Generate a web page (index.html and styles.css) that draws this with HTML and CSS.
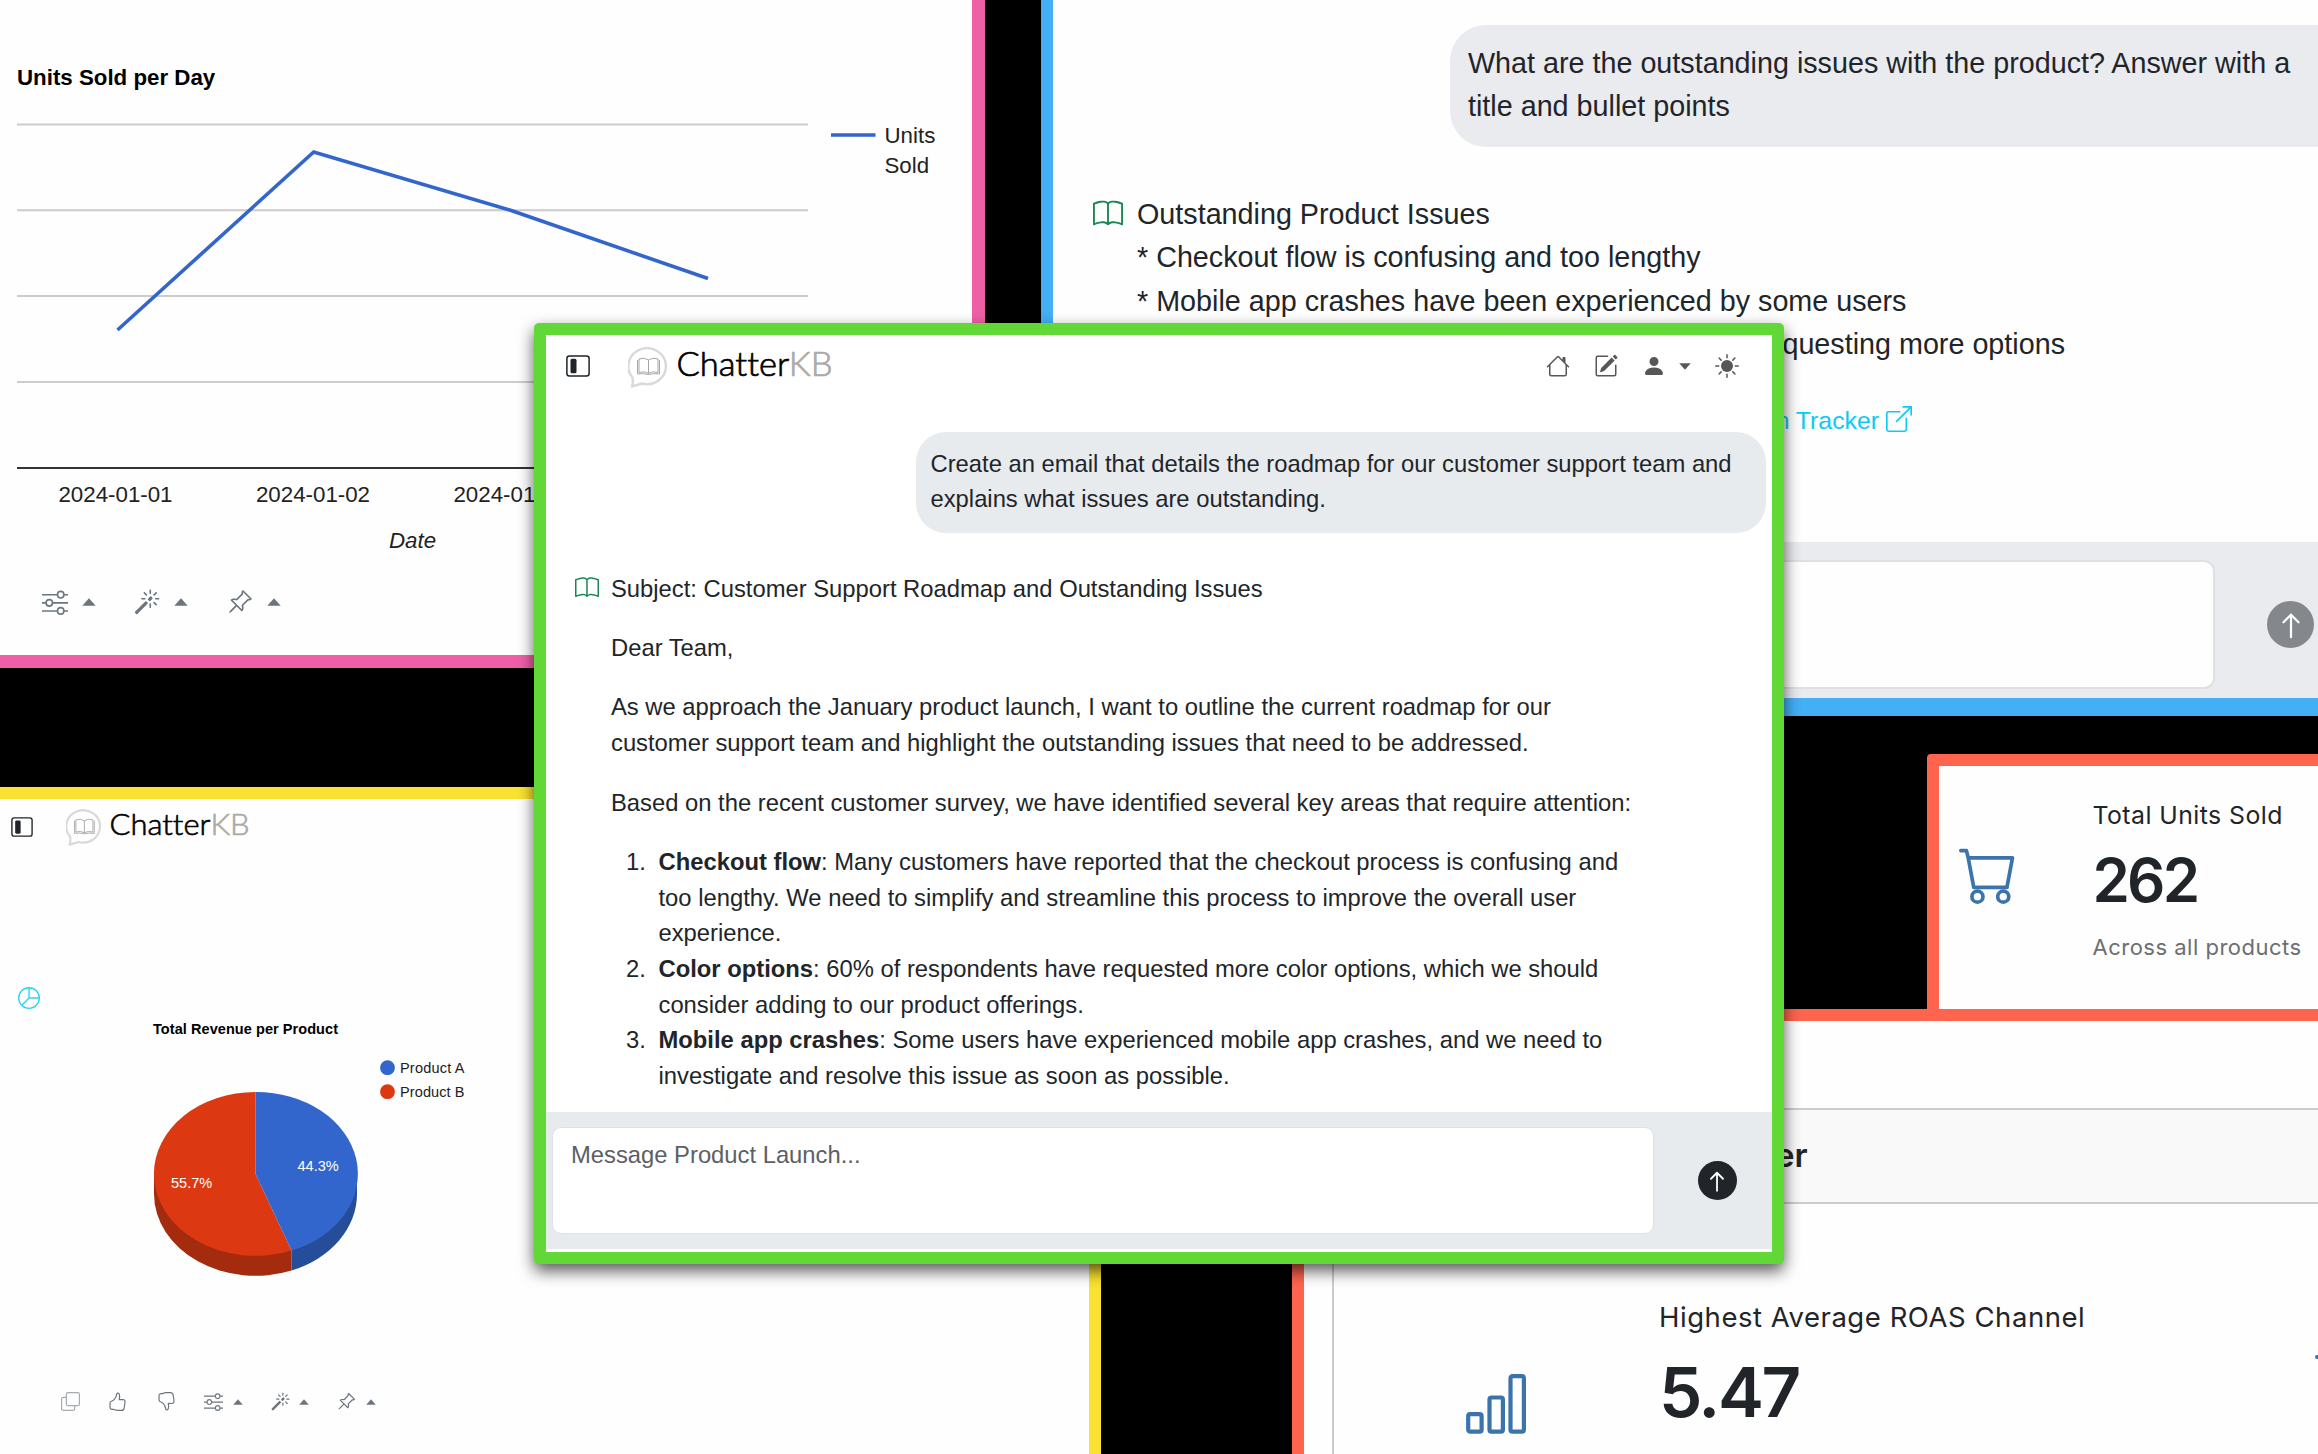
FILE: index.html
```html
<!DOCTYPE html>
<html lang="en">
<head>
<meta charset="utf-8">
<title>ChatterKB</title>
<link rel="stylesheet" href="styles.css">
</head>
<body>
<svg class="defs" aria-hidden="true">
  <symbol id="i-sliders" viewBox="0 0 16 16"><path fill-rule="evenodd" d="M11.5 2a1.5 1.5 0 1 0 0 3 1.5 1.5 0 0 0 0-3M9.05 3a2.5 2.5 0 0 1 4.9 0H16v1h-2.05a2.5 2.5 0 0 1-4.9 0H0V3zM4.5 7a1.5 1.5 0 1 0 0 3 1.5 1.5 0 0 0 0-3M2.05 8a2.5 2.5 0 0 1 4.9 0H16v1H6.95a2.5 2.5 0 0 1-4.9 0H0V8zm9.45 4a1.5 1.5 0 1 0 0 3 1.5 1.5 0 0 0 0-3m-2.45 1a2.5 2.5 0 0 1 4.9 0H16v1h-2.05a2.5 2.5 0 0 1-4.9 0H0v-1z"/></symbol>
  <symbol id="i-magic" viewBox="0 0 16 16"><path d="M9.5 2.672a.5.5 0 1 0 1 0V.843a.5.5 0 0 0-1 0zm4.5.035A.5.5 0 0 0 13.293 2L12 3.293a.5.5 0 1 0 .707.707zM7.293 4A.5.5 0 1 0 8 3.293L6.707 2A.5.5 0 0 0 6 2.707zm-.621 2.5a.5.5 0 1 0 0-1H4.843a.5.5 0 1 0 0 1zm8.485 0a.5.5 0 1 0 0-1h-1.829a.5.5 0 0 0 0 1zM13.293 10A.5.5 0 1 0 14 9.293L12.707 8a.5.5 0 1 0-.707.707zM9.5 11.157a.5.5 0 0 0 1 0V9.328a.5.5 0 0 0-1 0zm1.854-5.097a.5.5 0 0 0 0-.706l-.708-.708a.5.5 0 0 0-.707 0L8.646 5.94a.5.5 0 0 0 0 .707l.708.708a.5.5 0 0 0 .707 0l1.293-1.293Zm-3 3a.5.5 0 0 0 0-.706l-.708-.708a.5.5 0 0 0-.707 0L.646 13.94a.5.5 0 0 0 0 .707l.707.707a.5.5 0 0 0 .707 0z"/></symbol>
  <symbol id="i-pin" viewBox="0 0 16 16"><path d="M9.828.722a.5.5 0 0 1 .354.146l4.95 4.95a.5.5 0 0 1 0 .707c-.48.48-1.072.588-1.503.588-.177 0-.335-.018-.46-.039l-3.134 3.134a6 6 0 0 1 .16 1.013c.046.702-.032 1.687-.72 2.375a.5.5 0 0 1-.707 0l-2.829-2.828-3.182 3.182c-.195.195-1.219.902-1.414.707s.512-1.22.707-1.414l3.182-3.182-2.828-2.829a.5.5 0 0 1 0-.707c.688-.688 1.673-.767 2.375-.72a6 6 0 0 1 1.013.16l3.134-3.133a3 3 0 0 1-.04-.461c0-.43.108-1.022.589-1.503a.5.5 0 0 1 .353-.146m.122 2.112v-.002zm0-.002v.002a.5.5 0 0 1-.122.51L6.293 6.878a.5.5 0 0 1-.511.12H5.78l-.014-.004a5 5 0 0 0-.288-.076 5 5 0 0 0-.765-.116c-.422-.028-.836.008-1.175.15l5.51 5.509c.141-.34.177-.753.149-1.175a5 5 0 0 0-.192-1.054l-.004-.013v-.001a.5.5 0 0 1 .12-.512l3.536-3.535a.5.5 0 0 1 .532-.115l.096.022c.087.017.208.034.344.034q.172.002.343-.04L9.927 2.028q-.042.172-.04.343a1.8 1.8 0 0 0 .062.46z"/></symbol>
  <symbol id="i-book" viewBox="0 0 16 16"><path d="M1 2.828c.885-.37 2.154-.769 3.388-.893 1.33-.134 2.458.063 3.112.752v9.746c-.935-.53-2.12-.603-3.213-.493-1.18.12-2.37.461-3.287.811zm7.5-.141c.654-.689 1.782-.886 3.112-.752 1.234.124 2.503.523 3.388.893v9.923c-.918-.35-2.107-.692-3.287-.81-1.094-.111-2.278-.039-3.213.492zM8 1.783C7.015.936 5.587.81 4.287.94c-1.514.153-3.042.672-3.994 1.105A.5.5 0 0 0 0 2.5v11a.5.5 0 0 0 .707.455c.882-.4 2.303-.881 3.68-1.02 1.409-.142 2.59.087 3.223.877a.5.5 0 0 0 .78 0c.633-.79 1.814-1.019 3.222-.877 1.378.139 2.8.62 3.681 1.02A.5.5 0 0 0 16 13.5v-11a.5.5 0 0 0-.293-.455c-.952-.433-2.48-.952-3.994-1.105C10.413.809 8.985.936 8 1.783"/></symbol>
  <symbol id="i-house" viewBox="0 0 16 16"><path d="M8.707 1.5a1 1 0 0 0-1.414 0L.646 8.146a.5.5 0 0 0 .708.708L2 8.207V13.5A1.5 1.5 0 0 0 3.5 15h9a1.5 1.5 0 0 0 1.5-1.5V8.207l.646.647a.5.5 0 0 0 .708-.708L13 5.793V2.5a.5.5 0 0 0-.5-.5h-1a.5.5 0 0 0-.5.5v1.293zM13 7.207V13.5a.5.5 0 0 1-.5.5h-9a.5.5 0 0 1-.5-.5V7.207l5-5z"/></symbol>
  <symbol id="i-edit" viewBox="0 0 16 16"><path d="M15.502 1.94a.5.5 0 0 1 0 .706L14.459 3.69l-2-2L13.502.646a.5.5 0 0 1 .707 0l1.293 1.293zm-1.75 2.456-2-2L4.939 9.21a.5.5 0 0 0-.121.196l-.805 2.414a.25.25 0 0 0 .316.316l2.414-.805a.5.5 0 0 0 .196-.12l6.813-6.814z"/><path fill-rule="evenodd" d="M1 13.5A1.5 1.5 0 0 0 2.5 15h11a1.5 1.5 0 0 0 1.5-1.5v-6a.5.5 0 0 0-1 0v6a.5.5 0 0 1-.5.5h-11a.5.5 0 0 1-.5-.5v-11a.5.5 0 0 1 .5-.5H9a.5.5 0 0 0 0-1H2.5A1.5 1.5 0 0 0 1 2.5z"/></symbol>
  <symbol id="i-person" viewBox="0 0 16 16"><path d="M3 14s-1 0-1-1 1-4 6-4 6 3 6 4-1 1-1 1zm5-6a3 3 0 1 0 0-6 3 3 0 0 0 0 6"/></symbol>
  <symbol id="i-sun" viewBox="0 0 16 16"><circle cx="8" cy="8" r="4"/><path fill="none" stroke="currentColor" stroke-linecap="round" d="M8 .5v2M8 13.5v2M.5 8h2M13.5 8h2M2.7 2.7l1.4 1.4M11.9 11.9l1.4 1.4M2.7 13.3l1.4-1.4M11.9 4.1l1.4-1.4"/></symbol>
  <symbol id="i-up" viewBox="0 0 16 16"><path fill="none" stroke="currentColor" stroke-linecap="round" stroke-linejoin="round" stroke-width="1.2" d="M8 14.5v-12M4 6.5l4-4 4 4"/></symbol>
  <symbol id="i-external" viewBox="0 0 16 16"><path fill="none" stroke="currentColor" stroke-linecap="round" stroke-linejoin="round" d="M8.5 3.5h-7a1 1 0 0 0-1 1v10a1 1 0 0 0 1 1h10a1 1 0 0 0 1-1v-7M10.5.5h5v5M15.5.5l-9 9"/></symbol>
  <symbol id="i-copy" viewBox="0 0 16 16"><g fill="none" stroke="currentColor"><rect x="4.5" y=".5" width="11" height="11" rx="1.5"/><path d="M4.500 4.500H2A1.500 1.500 0 0 0 .5 6v8A1.500 1.500 0 0 0 2 15.500h8a1.500 1.500 0 0 0 1.500-1.500v-2.500"/></g></symbol>
  <symbol id="i-thumb" viewBox="0 0 16 16"><path fill="none" stroke="currentColor" stroke-linejoin="round" d="M4.500 14.600c1.200.7 2.200.9 3.500.9h3.400c1.200 0 2-.7 2.100-1.700l.3-1.600.3-1.900.2-2c.2-1.200-.6-1.900-1.800-2l-3 .1c.3-1.400.4-3 .1-4.200C9.300.9 7.700.5 7.400 1.600c-.3 2.300-.8 3.400-2.200 4.800-.8.800-1.400 1.100-1.900 1.200-1.100.3-1.600 1-1.600 1.900v3.300c0 1 .6 1.600 1.500 1.800.5.100.8 0 1.300 0z"/></symbol>
  <symbol id="i-pie" viewBox="0 0 16 16"><g fill="none" stroke="currentColor"><circle cx="8" cy="8" r="7.5"/><path d="M8 .5V8h7.5M8 8l-5.200 5.200"/></g></symbol>
  <symbol id="i-caret-up" viewBox="0 0 14 8"><path d="M7 .3 13.700 7.800H.3z"/></symbol>
  <symbol id="i-caret-down" viewBox="0 0 14 8"><path d="M7 7.700.3.200h13.400z"/></symbol>
  <symbol id="i-sidebar" viewBox="0 0 24 22"><rect x=".9" y=".9" width="22.200" height="20.200" rx="2.500" fill="none" stroke="currentColor" stroke-width="1.500"/><rect x="4.500" y="3.800" width="6" height="14.500" rx="1.500"/></symbol>
  <symbol id="i-cart" viewBox="0 0 16 16"><g fill="none" stroke="currentColor" stroke-linecap="round" stroke-linejoin="round"><path d="M.5 1.500H2l.5 2h12L13 11.500H4l-1.500-8"/><circle cx="5" cy="14" r="1.500"/><circle cx="12" cy="14" r="1.500"/></g></symbol>
  <symbol id="i-bars" viewBox="0 0 60 60"><g fill="none" stroke="currentColor" stroke-width="4.200"><rect x="2.200" y="40.200" width="13.400" height="17.500" rx="2"/><rect x="23.500" y="23.500" width="13.400" height="34.200" rx="2"/><rect x="44.500" y="2.200" width="13.400" height="55.500" rx="2"/></g></symbol>
  <symbol id="i-logo" viewBox="0 0 206 42">
    <path d="M4.500 30.500A18.800 18 0 1 1 14 36.500l-10 3Q5.500 35 4.500 30.500z" fill="none" stroke="#d9d9d9" stroke-width="2.400" stroke-linejoin="round"/>
    <g fill="none" stroke="#a6a6a6" stroke-width="1"><path d="M20.500 13q-4-3-9.500-1v13.500q5.500-1.700 9.500.8 4-2.500 9.500-.8V12q-5.500-2-9.500 1z"/><path d="M20.500 13v13.500"/><path d="M9.500 13v14q6-1 11 .5 5-1.500 11-.5V13"/></g>
    <text class="logo-text" x="48.500" y="29.300" textLength="156" lengthAdjust="spacingAndGlyphs">Chatter<tspan fill="#aaa" stroke="#aaa">KB</tspan></text>
  </symbol>
</svg>

<main class="desktop">
  <section class="window win-line">
    <svg class="line-chart" viewBox="0 0 972 570">
      <text class="chart-title" x="17" y="85">Units Sold per Day</text>
      <path d="M17 124.500H808M17 210.300H808M17 296H808M17 382H808" stroke="#ccc" stroke-width="2"/>
      <path d="M17 468H808" stroke="#333" stroke-width="2"/>
      <path d="M117.500 330 313.700 152 510.500 210.300 708 278.500" fill="none" stroke="#36c" stroke-width="3.600"/>
      <path d="M831 135h44.500" stroke="#36c" stroke-width="3.600"/>
      <text x="884.500" y="143">Units</text><text x="884.500" y="173">Sold</text>
      <g text-anchor="middle"><text x="115.500" y="501.500">2024-01-01</text><text x="313" y="501.500">2024-01-02</text><text x="510.500" y="501.500">2024-01-03</text><text x="412.500" y="548" font-style="italic">Date</text></g>
    </svg>
    <div class="tools tools-lg">
      <svg class="ic"><use href="#i-sliders"/></svg><svg class="caret"><use href="#i-caret-up"/></svg>
      <svg class="ic"><use href="#i-magic"/></svg><svg class="caret"><use href="#i-caret-up"/></svg>
      <svg class="ic"><use href="#i-pin"/></svg><svg class="caret"><use href="#i-caret-up"/></svg>
    </div>
  </section>

  <section class="window win-issues">
    <div class="issues-question">What are the outstanding issues with the product? Answer with a title and bullet points</div>
    <div class="issues-answer">
      <svg class="book"><use href="#i-book"/></svg>
      <div class="issues-lines">
        <div>Outstanding Product Issues</div>
        <div>* Checkout flow is confusing and too lengthy</div>
        <div>* Mobile app crashes have been experienced by some users</div>
        <div class="tail">requesting more options</div>
        <a class="source">n Tracker <svg class="ext"><use href="#i-external"/></svg></a>
      </div>
    </div>
    <div class="issues-composer"><div class="input"></div><div class="send"><svg><use href="#i-up"/></svg></div></div>
  </section>

  <section class="window win-pie">
    <header class="brand"><svg class="toggle"><use href="#i-sidebar"/></svg><svg class="logo"><use href="#i-logo"/></svg></header>
    <svg class="pie-icon"><use href="#i-pie"/></svg>
    <svg class="pie-chart" viewBox="0 1010 500 290">
      <text class="pie-title" x="153" y="1034.300" textLength="185">Total Revenue per Product</text>
      <circle cx="387.500" cy="1067.700" r="7.400" fill="#36c"/><circle cx="387.500" cy="1091.700" r="7.400" fill="#dc3912"/>
      <text x="400" y="1073" textLength="64.500">Product A</text><text x="400" y="1097" textLength="64.500">Product B</text>
      <path fill="#a52b0e" d="M154 1174v20A101.600 81.800 0 0 0 291.600 1270.500v-20z"/>
      <path fill="#264d99" d="M357 1174v20A101.600 81.800 0 0 1 291.600 1270.500v-20z"/>
      <path fill="#dc3912" d="M255.500 1174V1092A101.600 81.800 0 0 0 153.900 1174A101.600 81.800 0 0 0 291.600 1250.500z"/>
      <path fill="#36c" d="M255.500 1174V1092A101.600 81.800 0 0 1 291.600 1250.500z"/>
      <text class="pct" x="297.500" y="1170.700">44.3%</text><text class="pct" x="171" y="1188">55.7%</text>
    </svg>
    <div class="tools tools-sm">
      <svg class="ic copy"><use href="#i-copy"/></svg>
      <svg class="ic thumb"><use href="#i-thumb"/></svg>
      <svg class="ic thumb down"><use href="#i-thumb"/></svg>
      <svg class="ic"><use href="#i-sliders"/></svg><svg class="caret"><use href="#i-caret-up"/></svg>
      <svg class="ic"><use href="#i-magic"/></svg><svg class="caret"><use href="#i-caret-up"/></svg>
      <svg class="ic"><use href="#i-pin"/></svg><svg class="caret"><use href="#i-caret-up"/></svg>
    </div>
  </section>

  <section class="window win-units">
    <svg class="cart"><use href="#i-cart"/></svg>
    <div class="stat"><div class="stat-label">Total Units Sold</div><div class="stat-value">262</div><div class="stat-note">Across all products</div></div>
  </section>

  <section class="window win-roas">
    <div class="panel">
      <div class="panel-head">er</div>
      <div class="panel-body">
        <svg class="bars"><use href="#i-bars"/></svg>
        <div class="roas"><div class="roas-label">Highest Average ROAS Channel</div><div class="roas-value">5.47</div></div>
        <i class="next-icon"></i>
      </div>
    </div>
  </section>

  <section class="window win-chat">
    <header class="chat-head">
      <svg class="toggle"><use href="#i-sidebar"/></svg><svg class="logo"><use href="#i-logo"/></svg>
      <nav class="chat-nav">
        <svg class="ic"><use href="#i-house"/></svg><svg class="ic"><use href="#i-edit"/></svg><svg class="ic"><use href="#i-person"/></svg><svg class="caret"><use href="#i-caret-down"/></svg><svg class="ic"><use href="#i-sun"/></svg>
      </nav>
    </header>
    <div class="question">Create an email that details the roadmap for our customer support team and explains what issues are outstanding.</div>
    <article class="answer">
      <svg class="book"><use href="#i-book"/></svg>
      <div class="mail">
        <p>Subject: Customer Support Roadmap and Outstanding Issues</p>
        <p>Dear Team,</p>
        <p>As we approach the January product launch, I want to outline the current roadmap for our customer support team and highlight the outstanding issues that need to be addressed.</p>
        <p>Based on the recent customer survey, we have identified several key areas that require attention:</p>
        <ol>
          <li><span class="num">1.</span><div><b>Checkout flow</b>: Many customers have reported that the checkout process is confusing and too lengthy. We need to simplify and streamline this process to improve the overall user experience.</div></li>
          <li><span class="num">2.</span><div><b>Color options</b>: 60% of respondents have requested more color options, which we should consider adding to our product offerings.</div></li>
          <li><span class="num">3.</span><div><b>Mobile app crashes</b>: Some users have experienced mobile app crashes, and we need to investigate and resolve this issue as soon as possible.</div></li>
        </ol>
      </div>
    </article>
    <footer class="composer"><div class="input">Message Product Launch...</div><div class="send"><svg><use href="#i-up"/></svg></div></footer>
  </section>
</main>
</body>
</html>
```
FILE: styles.css
```css
* { box-sizing: border-box; }
body { margin: 0; background: #000; color: #212529; font-family: "Liberation Sans", Arial, sans-serif; }
svg { display: block; fill: currentColor; flex: none; overflow: visible; }
p, ol { margin: 0; }
.defs { position: absolute; width: 0; height: 0; }
.desktop { position: relative; width: 2318px; height: 1454px; overflow: hidden; }
.window { position: absolute; background: #fefefe; overflow: hidden; }
.logo-text { font: 300 32.5px Lato, sans-serif; font-variant-ligatures: none; fill: #000; stroke: #000; stroke-width: .7px; }

/* units sold chart */
.win-line { left: 0; top: 0; width: 985px; height: 668px; border: solid #ee5fa7; border-width: 0 13px 13px 0; }
.line-chart { width: 972px; height: 570px; font-size: 22.3px; fill: #222; }
.chart-title { font-weight: bold; fill: #000; }
.tools { display: flex; align-items: center; color: #6c757d; }
.tools-lg { padding: 19px 0 0 41.5px; }
.tools-lg .ic { width: 26px; height: 26px; }
.tools-lg .caret { width: 14px; height: 8px; margin: 0 38.5px 0 14px; }

/* product issues chat */
.win-issues { left: 1041px; top: 0; width: 1300px; height: 716px; border: solid #43aff5; border-width: 0 0 18px 12px; display: flex; flex-direction: column; font-size: 28.72px; line-height: 43.3px; }
.issues-question { margin: 25px 0 0 397px; height: 122px; width: 920px; padding: 17px 49px 0 18px; border-radius: 36px; background: #eaebef; }
.issues-answer { display: flex; gap: 14px; margin: 46px 0 0 40px; }
.issues-answer .book { width: 30px; height: 30px; margin-top: 6px; color: #198754; }
.issues-lines { width: 928px; }
.tail { text-align: right; }
.source { display: flex; justify-content: flex-end; align-items: center; gap: 7px; width: 775px; margin-top: 33px; font-size: 24.8px; color: #0dcaf0; }
.ext { width: 26px; height: 26px; margin-top: -4px; }
.issues-composer { display: flex; margin-top: auto; height: 156px; padding-top: 18px; background: #eaebef; }
.issues-composer .input { width: 1162px; height: 129px; background: #fefefe; border: 2px solid #dee0e4; border-radius: 11px; }
.issues-composer .send { width: 47px; height: 47px; margin: 41px 0 0 52px; background: #84878b; }
.issues-composer .send svg { width: 30px; height: 30px; }
.send { display: flex; align-items: center; justify-content: center; border-radius: 50%; color: #fff; }

/* revenue chart */
.win-pie { left: -12px; top: 787px; width: 1113px; height: 700px; border: 12px solid #f9e231; display: flex; flex-direction: column; align-items: flex-start; }
.brand { display: flex; align-items: center; height: 58px; padding: 0 0 0 10.5px; }
.brand .toggle { width: 22px; height: 20px; margin-top: -3px; }
.brand .logo { width: 185px; height: 38px; margin: 0 0 0 33px; }
.pie-icon { width: 22px; height: 22px; margin: 130px 0 0 18px; color: #31d2f2; }
.pie-chart { width: 500px; height: 290px; margin-top: 1px; font-size: 14.5px; fill: #222; }
.pie-title { font-weight: bold; fill: #000; }
.pct { fill: #fff; }
.tools-sm { padding: 92px 0 0 61px; }
.tools-sm .ic { width: 19px; height: 19px; }
.tools-sm .copy { margin-right: 28px; color: #a5abb0; }
.tools-sm .thumb { margin-right: 30px; }
.tools-sm .down { margin-right: 28px; transform: rotate(180deg) scaleX(-1); }
.tools-sm .caret { width: 10px; height: 6px; margin: 0 28px 0 9.5px; }

/* stat cards */
.win-units, .win-roas { border: 12px solid #ff644e; font-family: Inter, sans-serif; }
.win-units { left: 1927px; top: 754px; width: 420px; height: 267px; border-radius: 4px; display: flex; }
.cart { width: 59px; height: 59px; margin: 79px 74.5px 0 20px; color: #3a74ab; }
.stat { white-space: nowrap; }
.stat-label { margin-top: 33px; font-size: 24.8px; line-height: 32px; letter-spacing: .45px; }
.stat-value { margin-top: 14px; font-size: 60px; line-height: 70px; font-weight: 600; letter-spacing: -2.8px; }
.stat-note { margin-top: 16px; font-size: 22px; line-height: 32px; letter-spacing: .5px; color: #6c6f72; }
.win-roas { left: 1292px; top: 1009px; width: 1060px; height: 500px; }
.panel { margin: 87px 0 0 28px; border: 2px solid #ccc; height: 400px; }
.panel-head { height: 94px; border-bottom: 2px solid #ccc; background: #f9f9f9; padding-left: 441px; width: 1000px; font-size: 33px; line-height: 91px; font-weight: 600; }
.panel-body { display: flex; }
.bars { width: 60px; height: 60px; margin: 170px 133px 0 132px; color: #3a74ab; }
.roas { white-space: nowrap; width: 650px; }
.roas-label { margin-top: 95px; font-size: 27.5px; line-height: 36px; letter-spacing: .54px; }
.roas-value { margin-top: 16.5px; font-size: 69px; line-height: 80px; font-weight: 600; letter-spacing: -2.4px; }
.next-icon { width: 8px; height: 4px; margin: 151px 0 0 6px; border-radius: 2px; background: #3a74ab; }

/* foreground chat window */
.win-chat { left: 534px; top: 323px; width: 1250px; height: 941px; border: 12px solid #61d836; border-radius: 5px; background: #fff; display: flex; flex-direction: column; box-shadow: 0 7px 16px rgba(0, 0, 0, .65); font-size: 23.79px; line-height: 35.65px; padding-bottom: 3px; }
.chat-head { display: flex; align-items: center; height: 62px; padding: 0 33px 0 20px; }
.chat-head .toggle { width: 24px; height: 22px; }
.chat-head .logo { width: 206px; height: 42px; margin: 4px 0 0 37.5px; }
.chat-nav { display: flex; align-items: center; margin-left: auto; color: #575757; }
.chat-nav .ic { width: 24px; height: 24px; margin-left: 24px; }
.chat-nav .caret { width: 12px; height: 7px; margin-left: 13px; }
.question { align-self: flex-end; width: 850px; height: 101px; margin: 34.5px 6px 0 0; padding: 14px 20px 0 14.5px; border-radius: 30px; background: #e8ebee; }
.answer { display: flex; gap: 12px; margin: 38px 0 0 29px; }
.answer .book { width: 24px; height: 24px; margin-top: 5px; color: #198754; }
.mail { width: 1035px; }
.mail p { margin-bottom: 23.8px; width: 1030px; }
.mail p:nth-child(3) { width: 960px; }
.mail ol { padding: 0; width: 1010px; list-style: none; }
.mail li { display: flex; }
.num { flex: none; width: 47.5px; padding-left: 15px; }
.composer { display: flex; height: 137px; margin-top: auto; padding: 15px 0 0 6px; background: #e8ebee; }
.composer .input { width: 1102px; height: 107px; padding: 9px 18px; border: 1.5px solid #dee2e6; border-radius: 9px; background: #fff; color: #5c6064; }
.composer .send { width: 39px; height: 39px; margin: 34px 0 0 43.5px; background: #212529; }
.composer .send svg { width: 24px; height: 24px; }
```
